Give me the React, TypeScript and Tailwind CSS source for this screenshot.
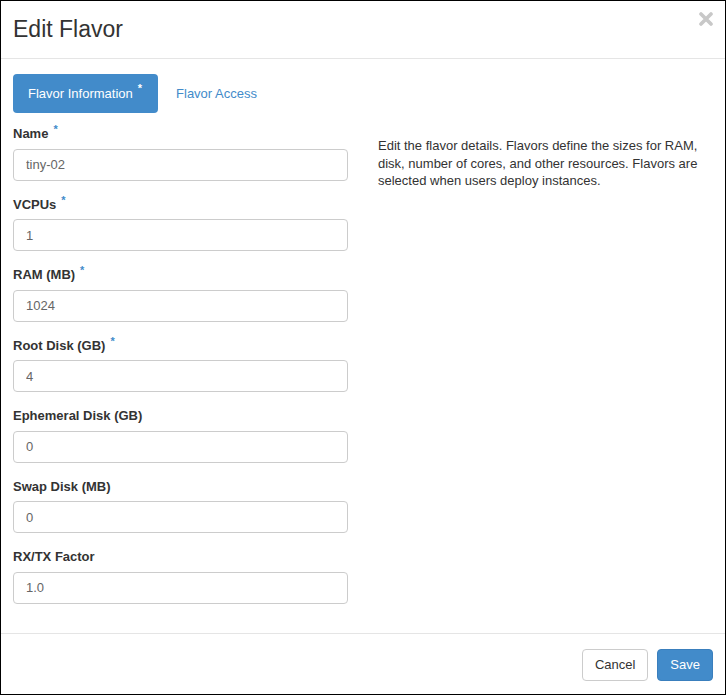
import React from "react";

const fields = [
  { label: "Name", value: "tiny-02", required: true },
  { label: "VCPUs", value: "1", required: true },
  { label: "RAM (MB)", value: "1024", required: true },
  { label: "Root Disk (GB)", value: "4", required: true },
  { label: "Ephemeral Disk (GB)", value: "0", required: false },
  { label: "Swap Disk (MB)", value: "0", required: false },
  { label: "RX/TX Factor", value: "1.0", required: false },
];

function Star({ white }: { white?: boolean }) {
  return (
    <span
      className={`relative -top-[5px] ml-[5px] text-[11px] font-bold ${white ? "text-white" : "text-[#428bca]"}`}
    >
      *
    </span>
  );
}

export default function App() {
  return (
    <div
      className="flex h-[695px] w-[726px] flex-col border border-black bg-white text-[13px] text-[#333]"
      style={{ fontFamily: '"Liberation Sans", Arial, sans-serif' }}
    >
      {/* header */}
      <div className="relative flex h-[58px] shrink-0 items-center border-b border-[#e5e5e5] px-3">
        <h4 className="text-[23px] leading-[27px] font-normal text-[#333]">Edit Flavor</h4>
        <button type="button" className="absolute top-[11px] right-[12px]" aria-label="Close">
          <svg width="14" height="14" viewBox="0 0 14 14">
            <path d="M2 2 L12 12 M12 2 L2 12" stroke="#c8c8c8" strokeWidth="3.6" strokeLinecap="round" />
          </svg>
        </button>
      </div>

      {/* body */}
      <div className="px-3 pt-[15px]">
        <div className="flex items-center">
          <div className="flex h-[39px] items-center rounded-[4px] bg-[#428bca] pr-[16px] pl-[15px] text-white">
            Flavor Information
            <Star white />
          </div>
          <div className="ml-[3px] flex h-[39px] items-center px-[15px] text-[#428bca]">Flavor Access</div>
        </div>

        <div className="mt-[12px] grid grid-cols-2 gap-[30px]">
          <div>
            {fields.map((f) => (
              <div key={f.label} className="mb-[15px]">
                <label className="mb-[5px] block leading-[18.5px] font-bold text-[#333]">
                  {f.label}
                  {f.required && <Star />}
                </label>
                <input
                  type="text"
                  readOnly
                  value={f.value}
                  className="block h-8 w-full rounded-[4px] border border-[#ccc] px-3 text-[13px] text-[#666] outline-none"
                />
              </div>
            ))}
          </div>
          <div className="pt-[12px]">
            <p className="leading-[17.5px] text-[#333]">
              Edit the flavor details. Flavors define the sizes for RAM, disk, number of cores, and other resources.
              Flavors are selected when users deploy instances.
            </p>
          </div>
        </div>
      </div>

      {/* footer */}
      <div className="mt-auto flex justify-end gap-[9px] border-t border-[#e5e5e5] px-3 pt-[15px] pb-[13px]">
        <button
          type="button"
          className="h-8 rounded-[4px] border border-[#ccc] bg-white px-3 text-[13px] text-[#333]"
        >
          Cancel
        </button>
        <button
          type="button"
          className="h-8 rounded-[4px] border border-[#3a7fbd] bg-[#428bca] px-3 text-[13px] text-white"
        >
          Save
        </button>
      </div>
    </div>
  );
}
